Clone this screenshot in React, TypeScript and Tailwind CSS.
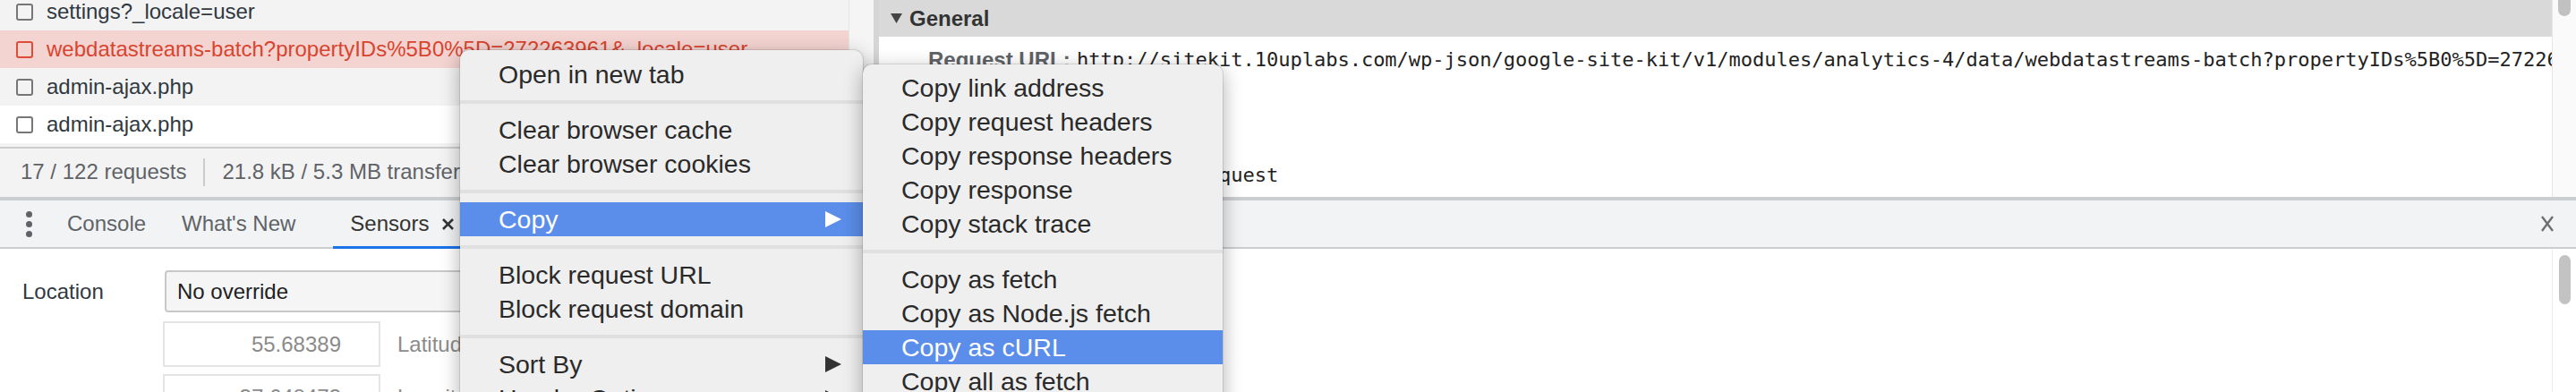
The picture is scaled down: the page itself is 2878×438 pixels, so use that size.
import type { ReactNode } from "react";

const requests = [
    { name: "settings?_locale=user", bg: "bg-[#f3f3f3]", error: false },
    { name: "webdatastreams-batch?propertyIDs%5B0%5D=272263961&_locale=user", bg: "bg-[#f4d4d1]", error: true },
    { name: "admin-ajax.php", bg: "bg-[#f3f3f3]", error: false },
    { name: "admin-ajax.php", bg: "bg-white", error: false },
];

const generalRows = [
    {
        label: "Request URL:",
        value: "http://sitekit.10uplabs.com/wp-json/google-site-kit/v1/modules/analytics-4/data/webdatastreams-batch?propertyIDs%5B0%5D=272263961&_locale=user",
    },
    { label: "Request Method:", value: "GET" },
    { label: "Status Code:", value: "200 OK" },
    { label: "Initiator Type:", value: "xhr-fetch-request" },
];

function Arrow({ white }: { white?: boolean }) {
    return (
        <svg width="18" height="18" viewBox="0 0 18 18" className="ml-auto">
            <polygon points="0,0 18,9 0,18" fill={white ? "#ffffff" : "#333333"} />
        </svg>
    );
}

function Item({ children, active, sub }: { children: ReactNode; active?: boolean; sub?: boolean }) {
    return (
        <div
            className={`h-[38px] flex items-center pl-[43px] pr-[24px] whitespace-nowrap ${
                active ? "bg-[#5b8eea] text-white" : "text-[#2a2a2a]"
            }`}
        >
            {children}
            {sub && <Arrow white={active} />}
        </div>
    );
}

function Sep() {
    return <div className="my-[10px] h-[4px] bg-[#e0e0e0]" />;
}

export default function App() {
    return (
        <div className="relative w-[2878px] h-[438px] overflow-hidden bg-white font-['Liberation_Sans',Arial,sans-serif] text-[24px] text-[#303942]">
            {/* ================= TOP: NETWORK LIST + HEADERS ================= */}
            <div className="flex h-[220px]">
                <div className="w-[976px] flex flex-col bg-[#f3f3f3] shrink-0">
                    <div className="h-[166px] flex overflow-hidden border-b-2 border-[#cdcdcd]">
                        <div className="w-[948px] overflow-hidden">
                            <div className="-mt-[8px]">
                                {requests.map((r, i) => (
                                    <div key={i} className={`h-[42px] flex items-center pl-[18px] whitespace-nowrap ${r.bg}`}>
                                        <div
                                            className={`w-[19px] h-[19px] shrink-0 rounded-[3px] border-2 ${
                                                r.error ? "border-[#dd4b39]" : "border-[#767676]"
                                            }`}
                                        />
                                        <span className={`ml-[15px] ${r.error ? "text-[#d94430]" : "text-[#303942]"}`}>
                                            {r.name}
                                        </span>
                                    </div>
                                ))}
                            </div>
                        </div>
                        <div className="w-[28px] bg-[#f5f5f5] border-l border-[#e6e6e6]" />
                    </div>
                    <div className="h-[52px] flex items-center pl-[23px] text-[#5f6368] whitespace-nowrap">
                        <span>17 / 122 requests</span>
                        <div className="mx-[19px] w-[2px] h-[31px] bg-[#cccccc]" />
                        <span>21.8 kB / 5.3 MB transferred</span>
                    </div>
                </div>

                <div className="flex-1 flex min-w-0 border-l-[6px] border-[#d5d5d5]">
                    <div className="flex-1 min-w-0 overflow-hidden">
                        <div className="h-[41px] bg-[#d9d9d9] flex items-center pl-[13px]">
                            <svg width="13" height="11" viewBox="0 0 13 11">
                                <polygon points="0,0 13,0 6.5,11" fill="#444444" />
                            </svg>
                            <span className="ml-[8px] font-bold text-[#333333]">General</span>
                        </div>
                        <div className="pt-[4px] pl-[55px]">
                            {generalRows.map((row, i) => (
                                <div key={i} className="h-[43px] flex items-center whitespace-nowrap">
                                    <span className="w-[166px] shrink-0 font-bold text-[#5f6368]">{row.label}</span>
                                    <span className="font-['DejaVu_Sans_Mono',monospace] text-[22px] text-[#222222]">
                                        {row.value}
                                    </span>
                                </div>
                            ))}
                        </div>
                    </div>
                    <div className="w-[27px] shrink-0 bg-[#fafafa] border-l border-[#e6e6e6]">
                        <div className="-mt-[8px] mx-auto w-[14px] h-[26px] rounded-full bg-[#c1c1c1]" />
                    </div>
                </div>
            </div>
            <div className="h-[4px] bg-[#cbcdd1]" />

            {/* ================= DRAWER TABS ================= */}
            <div className="h-[54px] flex bg-[#f1f3f4] border-b-2 border-[#cbcdd1]">
                <div className="w-[55px] flex flex-col justify-center gap-[4px] pl-[29px]">
                    <div className="w-[7px] h-[7px] rounded-full bg-[#5f6368]" />
                    <div className="w-[7px] h-[7px] rounded-full bg-[#5f6368]" />
                    <div className="w-[7px] h-[7px] rounded-full bg-[#5f6368]" />
                </div>
                <div className="flex items-center px-[20px] text-[#5f6368]">Console</div>
                <div className="flex items-center px-[20px] text-[#5f6368]">What's New</div>
                <div className="relative ml-[22px] pl-[19px] pr-[20px] flex items-center text-[#333333]">
                    <span>Sensors</span>
                    <svg width="15" height="15" viewBox="0 0 15 15" className="ml-[14px]">
                        <path d="M2 2 L13 13 M13 2 L2 13" stroke="#333333" strokeWidth="2.6" />
                    </svg>
                    <div className="absolute left-0 right-0 -bottom-[2px] h-[3px] bg-[#1a73e8]" />
                </div>
                <div className="flex-1" />
                <div className="flex items-center pr-[24px]">
                    <svg width="16" height="20" viewBox="0 0 16 20">
                        <path d="M2 2 L14 18 M14 2 L2 18" stroke="#6e6e6e" strokeWidth="2.4" />
                    </svg>
                </div>
            </div>

            {/* ================= SENSORS PANEL ================= */}
            <div className="flex h-[160px]">
                <div className="flex-1 pt-[24px] pl-[25px]">
                    <div className="flex items-center">
                        <span className="w-[159px] shrink-0">Location</span>
                        <div className="w-[560px] h-[47px] rounded-[4px] border-2 border-[#c8c8c8] bg-[#f5f5f5] pl-[12px] flex items-center text-[#202124]">
                            No override
                        </div>
                    </div>
                    {[
                        { value: "55.68389", label: "Latitude" },
                        { value: "37.648473", label: "Longitude" },
                    ].map((f, i) => (
                        <div key={i} className={`flex items-center pl-[157px] ${i === 0 ? "mt-[10px]" : "mt-[8px]"}`}>
                            <div className="w-[243px] h-[51px] border-2 border-[#e4e4e4] bg-white flex items-center justify-end pr-[42px] text-[#8b8b8b]">
                                {f.value}
                            </div>
                            <span className="ml-[19px] text-[#8b8b8b]">{f.label}</span>
                        </div>
                    ))}
                </div>
                <div className="w-[27px] shrink-0 border-l border-[#ececec]">
                    <div className="mt-[7px] mx-auto w-[13px] h-[55px] rounded-full bg-[#c3c3c3]" />
                </div>
            </div>

            {/* ================= CONTEXT MENU ================= */}
            <div className="absolute left-[514px] top-[56px] w-[450px] pt-[8px] pb-[8px] rounded-[10px] bg-[#efefef] text-[28.5px] shadow-[0_6px_22px_rgba(0,0,0,0.32)] ring-1 ring-black/10">
                <Item>Open in new tab</Item>
                <Sep />
                <Item>Clear browser cache</Item>
                <Item>Clear browser cookies</Item>
                <Sep />
                <Item active sub>Copy</Item>
                <Sep />
                <Item>Block request URL</Item>
                <Item>Block request domain</Item>
                <Sep />
                <Item sub>Sort By</Item>
                <Item sub>Header Options</Item>
            </div>

            <div className="absolute left-[964px] top-[72px] w-[402px] pt-[7px] pb-[8px] rounded-[10px] bg-[#efefef] text-[28.5px] shadow-[0_6px_22px_rgba(0,0,0,0.32)] ring-1 ring-black/10">
                <Item>Copy link address</Item>
                <Item>Copy request headers</Item>
                <Item>Copy response headers</Item>
                <Item>Copy response</Item>
                <Item>Copy stack trace</Item>
                <Sep />
                <Item>Copy as fetch</Item>
                <Item>Copy as Node.js fetch</Item>
                <Item active>Copy as cURL</Item>
                <Item>Copy all as fetch</Item>
                <Item>Copy all as cURL</Item>
            </div>
        </div>
    );
}
